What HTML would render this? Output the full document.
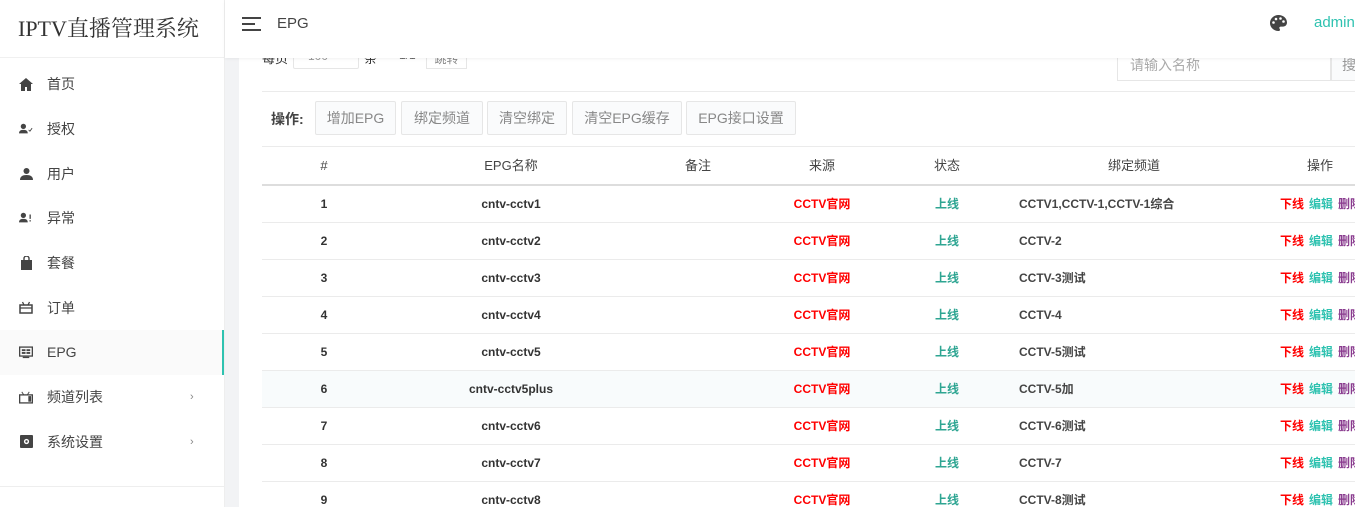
<!DOCTYPE html>
<html style="overflow:hidden"><head><meta charset="utf-8">
<style>
*{box-sizing:border-box;margin:0;padding:0}
html,body{width:1355px;height:507px;overflow:hidden}
body{background:#f2f3f5;font-family:"Liberation Sans","Noto Sans CJK SC",sans-serif;color:#333;position:relative}
.side{position:absolute;left:0;top:0;width:225px;height:507px;background:#fff;border-right:1px solid #eee}
.logo{height:58px;border-bottom:1px solid #f0f0f0;font-family:"Liberation Serif","Noto Serif CJK SC",serif;font-size:22px;color:#333;padding:12px 0 0 18px}
.menu{position:relative}
.mi{height:44.7px;display:flex;align-items:center;font-size:14px;color:#444;position:relative}
.mi .ic{width:14px;height:14px;margin-left:19px;margin-right:14px;display:flex;align-items:center;justify-content:center}
.mi.act{background:#fafafa}
.mi.act:after{content:"";position:absolute;right:0;top:0;bottom:0;width:2px;background:#2ec2b0}
.mi .arr{position:absolute;left:190px;color:#888;font-size:11px}
.sline{position:absolute;left:0;top:486px;width:225px;border-top:1px solid #eee}
.head{position:absolute;left:225px;top:0;width:1130px;height:58px;background:#fff;box-shadow:0 1px 3px rgba(0,0,0,.06);z-index:2}
.card{position:absolute;left:239px;top:0;width:1116px;height:507px;background:#fff}
.t{position:absolute;white-space:nowrap}
.btn{position:absolute;top:101px;height:34px;border:1px solid #e6e6e6;background:#fafbfc;color:#888;font-size:14px;line-height:32px;text-align:center;border-radius:2px}
.hl{position:absolute;left:262px;width:1093px;border-top:1px solid #ebebeb}
.th{position:absolute;top:147px;height:37px;line-height:37px;font-size:13px;color:#444;transform:translateX(-50%)}
.row{position:absolute;left:262px;width:1093px;height:37px;border-bottom:1px solid #ebebeb;font-size:12px;font-weight:bold}
.row span{position:absolute;top:0;height:36px;line-height:36px;white-space:nowrap}
.c{transform:translateX(-50%)}
</style></head><body>
<div class="side">
<div class="logo">IPTV直播管理系统</div>
<div class="menu" style="padding-top:4px">
<div class="mi"><span class="ic"><svg width="14" height="13" viewBox="0 0 14 13"><path d="M7 0L0 6h2v7h4V9h2v4h4V6h2z" fill="#444"/></svg></span>首页</div>
<div class="mi"><span class="ic"><svg width="16" height="12" viewBox="0 0 16 12"><circle cx="5" cy="3" r="3" fill="#444"/><path d="M0 11c0-3 2-4 5-4s5 1 5 4z" fill="#444"/><path d="M11 7l1.5 1.5L15 5" stroke="#444" fill="none"/></svg></span>授权</div>
<div class="mi"><span class="ic"><svg width="13" height="12" viewBox="0 0 13 12"><circle cx="6.5" cy="3" r="3" fill="#444"/><path d="M0 12c0-3.5 2.5-5 6.5-5s6.5 1.5 6.5 5z" fill="#444"/></svg></span>用户</div>
<div class="mi"><span class="ic"><svg width="16" height="12" viewBox="0 0 16 12"><circle cx="5" cy="3" r="3" fill="#444"/><path d="M0 11c0-3 2-4 5-4s5 1 5 4z" fill="#444"/><rect x="12" y="2" width="1.5" height="5" fill="#444"/><rect x="12" y="8.5" width="1.5" height="1.5" fill="#444"/></svg></span>异常</div>
<div class="mi"><span class="ic"><svg width="13" height="14" viewBox="0 0 13 14"><path d="M1 4h11v10H1z" fill="#444"/><path d="M4 5V2.5a2.5 2.5 0 0 1 5 0V5" stroke="#444" fill="none" stroke-width="1.4"/></svg></span>套餐</div>
<div class="mi"><span class="ic"><svg width="14" height="13" viewBox="0 0 14 13"><rect x="1" y="4" width="12" height="8" fill="none" stroke="#444" stroke-width="1.5"/><path d="M1 7h12M5 4L3.5 1M9 4l1.5-3" stroke="#444" stroke-width="1.3"/></svg></span>订单</div>
<div class="mi act"><span class="ic"><svg width="15" height="13" viewBox="0 0 15 13"><rect x="0.7" y="0.7" width="13.6" height="9.6" fill="none" stroke="#444" stroke-width="1.4"/><rect x="3" y="3" width="4" height="2" fill="#444"/><rect x="8" y="3" width="4" height="2" fill="#444"/><rect x="3" y="6" width="4" height="2" fill="#444"/><rect x="8" y="6" width="4" height="2" fill="#444"/><rect x="4" y="11" width="7" height="1.5" fill="#444"/></svg></span>EPG</div>
<div class="mi"><span class="ic"><svg width="15" height="13" viewBox="0 0 15 13"><rect x="0.7" y="3.7" width="13.6" height="8.6" fill="none" stroke="#444" stroke-width="1.4"/><rect x="10" y="5" width="3" height="6" fill="#444"/><path d="M5 3.5L3 0.5M9 3.5l2-3" stroke="#444"/></svg></span>频道列表<span class="arr">›</span></div>
<div class="mi"><span class="ic"><svg width="13" height="13" viewBox="0 0 13 13"><rect x="0" y="0" width="13" height="13" rx="1" fill="#444"/><circle cx="6.5" cy="6.5" r="2.6" fill="#fff"/><circle cx="6.5" cy="6.5" r="1.2" fill="#444"/></svg></span>系统设置<span class="arr">›</span></div>
</div>
<div class="sline"></div>
</div>
<div class="card"></div>
<div class="head">
<svg style="position:absolute;left:17px;top:17px" width="19" height="14" viewBox="0 0 19 14"><rect y="0" width="19" height="2" fill="#444"/><rect y="6" width="13" height="2" fill="#444"/><rect y="12" width="19" height="2" fill="#444"/></svg>
<span class="t" style="left:52px;top:15px;font-size:15px;color:#444">EPG</span>
<svg style="position:absolute;left:1045px;top:15px" width="17" height="16" viewBox="0 0 17 16"><path d="M8.5 0C3.8 0 0 3.6 0 8s3.8 8 8.5 8c1 0 1.5-.6 1.5-1.3 0-.8-.7-1-.7-1.8 0-.8.6-1.3 1.5-1.3H13c2.2 0 4-1.8 4-4C17 3.2 13.2 0 8.5 0z" fill="#444"/><circle cx="3.5" cy="7.5" r="1.3" fill="#fff"/><circle cx="6" cy="4" r="1.3" fill="#fff"/><circle cx="10.5" cy="3.5" r="1.3" fill="#fff"/><circle cx="13.5" cy="6.5" r="1.3" fill="#fff"/></svg>
<span class="t" style="left:1089px;top:14px;font-size:15px;color:#2ec2b0">admin</span>
</div>
<span class="t" style="left:262px;top:48px;font-size:13px;color:#333">每页</span>
<div class="t" style="left:293px;top:44px;width:66px;height:25px;border:1px solid #e6e6e6;border-radius:2px;font-size:12px;color:#999;padding:4px 0 0 14px">100 <span style="position:absolute;left:51px;top:4px;font-size:8px">▼</span></div>
<span class="t" style="left:364px;top:48px;font-size:13px">条</span>
<span class="t" style="left:399px;top:48px;font-size:12px;color:#666">1/1</span>
<div class="t" style="left:426px;top:44px;width:41px;height:25px;border:1px solid #e6e6e6;font-size:12px;color:#888;text-align:center;padding-top:5px">跳转</div>
<div class="t" style="left:1117px;top:44px;width:214px;height:37px;border:1px solid #e6e6e6;font-size:14px;color:#aaa;padding:10px 0 0 12px">请输入名称</div>
<div class="t" style="left:1331px;top:44px;width:30px;height:37px;border:1px solid #e6e6e6;background:#fafbfc;font-size:14px;color:#999;padding:10px 0 0 10px">搜</div>
<div class="hl" style="top:91px"></div>
<span class="t" style="left:271px;top:109px;font-size:14px;font-weight:bold;color:#444">操作:</span>
<div class="btn" style="left:315px;width:81px">增加EPG</div>
<div class="btn" style="left:401px;width:82px">绑定频道</div>
<div class="btn" style="left:487px;width:80px">清空绑定</div>
<div class="btn" style="left:572px;width:110px">清空EPG缓存</div>
<div class="btn" style="left:686px;width:110px">EPG接口设置</div>
<div class="hl" style="top:146px"></div>
<span class="th" style="left:324px">#</span>
<span class="th" style="left:511px">EPG名称</span>
<span class="th" style="left:698px">备注</span>
<span class="th" style="left:822px">来源</span>
<span class="th" style="left:947px">状态</span>
<span class="th" style="left:1134px">绑定频道</span>
<span class="th" style="left:1320px">操作</span>
<div class="hl" style="top:184px;border-top:2px solid #ddd"></div>
<div class="row" style="top:186px"><span class="c" style="left:62px">1</span><span class="c" style="left:249px">cntv-cctv1</span><span class="c" style="left:560px;color:#f00">CCTV官网</span><span class="c" style="left:685px;color:#2ea592">上线</span><span style="left:757px;color:#444">CCTV1,CCTV-1,CCTV-1综合</span><span style="left:1018px;color:#f00">下线</span><span style="left:1047px;color:#2ec2b0">编辑</span><span style="left:1076px;color:#8a3c8f">删除</span></div>
<div class="row" style="top:223px"><span class="c" style="left:62px">2</span><span class="c" style="left:249px">cntv-cctv2</span><span class="c" style="left:560px;color:#f00">CCTV官网</span><span class="c" style="left:685px;color:#2ea592">上线</span><span style="left:757px;color:#444">CCTV-2</span><span style="left:1018px;color:#f00">下线</span><span style="left:1047px;color:#2ec2b0">编辑</span><span style="left:1076px;color:#8a3c8f">删除</span></div>
<div class="row" style="top:260px"><span class="c" style="left:62px">3</span><span class="c" style="left:249px">cntv-cctv3</span><span class="c" style="left:560px;color:#f00">CCTV官网</span><span class="c" style="left:685px;color:#2ea592">上线</span><span style="left:757px;color:#444">CCTV-3测试</span><span style="left:1018px;color:#f00">下线</span><span style="left:1047px;color:#2ec2b0">编辑</span><span style="left:1076px;color:#8a3c8f">删除</span></div>
<div class="row" style="top:297px"><span class="c" style="left:62px">4</span><span class="c" style="left:249px">cntv-cctv4</span><span class="c" style="left:560px;color:#f00">CCTV官网</span><span class="c" style="left:685px;color:#2ea592">上线</span><span style="left:757px;color:#444">CCTV-4</span><span style="left:1018px;color:#f00">下线</span><span style="left:1047px;color:#2ec2b0">编辑</span><span style="left:1076px;color:#8a3c8f">删除</span></div>
<div class="row" style="top:334px"><span class="c" style="left:62px">5</span><span class="c" style="left:249px">cntv-cctv5</span><span class="c" style="left:560px;color:#f00">CCTV官网</span><span class="c" style="left:685px;color:#2ea592">上线</span><span style="left:757px;color:#444">CCTV-5测试</span><span style="left:1018px;color:#f00">下线</span><span style="left:1047px;color:#2ec2b0">编辑</span><span style="left:1076px;color:#8a3c8f">删除</span></div>
<div class="row" style="top:371px;background:#f8fbfc"><span class="c" style="left:62px">6</span><span class="c" style="left:249px">cntv-cctv5plus</span><span class="c" style="left:560px;color:#f00">CCTV官网</span><span class="c" style="left:685px;color:#2ea592">上线</span><span style="left:757px;color:#444">CCTV-5加</span><span style="left:1018px;color:#f00">下线</span><span style="left:1047px;color:#2ec2b0">编辑</span><span style="left:1076px;color:#8a3c8f">删除</span></div>
<div class="row" style="top:408px"><span class="c" style="left:62px">7</span><span class="c" style="left:249px">cntv-cctv6</span><span class="c" style="left:560px;color:#f00">CCTV官网</span><span class="c" style="left:685px;color:#2ea592">上线</span><span style="left:757px;color:#444">CCTV-6测试</span><span style="left:1018px;color:#f00">下线</span><span style="left:1047px;color:#2ec2b0">编辑</span><span style="left:1076px;color:#8a3c8f">删除</span></div>
<div class="row" style="top:445px"><span class="c" style="left:62px">8</span><span class="c" style="left:249px">cntv-cctv7</span><span class="c" style="left:560px;color:#f00">CCTV官网</span><span class="c" style="left:685px;color:#2ea592">上线</span><span style="left:757px;color:#444">CCTV-7</span><span style="left:1018px;color:#f00">下线</span><span style="left:1047px;color:#2ec2b0">编辑</span><span style="left:1076px;color:#8a3c8f">删除</span></div>
<div class="row" style="top:482px"><span class="c" style="left:62px">9</span><span class="c" style="left:249px">cntv-cctv8</span><span class="c" style="left:560px;color:#f00">CCTV官网</span><span class="c" style="left:685px;color:#2ea592">上线</span><span style="left:757px;color:#444">CCTV-8测试</span><span style="left:1018px;color:#f00">下线</span><span style="left:1047px;color:#2ec2b0">编辑</span><span style="left:1076px;color:#8a3c8f">删除</span></div>
</body></html>
